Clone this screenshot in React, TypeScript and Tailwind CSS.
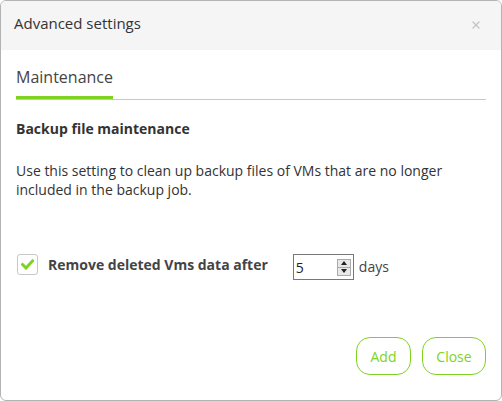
import { X } from 'lucide-react'

export default function App() {
  return (
    <div className="h-[401px] w-[502px] bg-white font-['Open_Sans',sans-serif] text-[#333]">
      <div className="flex h-full flex-col overflow-hidden rounded-[6px] border border-[#b3b3b3]">
        <div className="flex h-[49px] items-start justify-between bg-[#f5f5f5] pl-[13px] pr-[19px] pt-[11px]">
          <h2 className="text-[15px] leading-[22px] text-[#333]">Advanced settings</h2>
          <X size={12} strokeWidth={2.5} className="mt-[7px] text-[#c4c4c4]" />
        </div>

        <div className="flex flex-1 flex-col px-[15px]">
          <div className="mt-[15px] border-b border-[#c8c8c8]">
            <div className="inline-block border-b-[3px] border-[#7ed321] pb-[8px] text-[16px] leading-[22px] text-[#444]">
              Maintenance
            </div>
          </div>

          <h3 className="mt-[19px] text-[14px] font-bold leading-[20px] text-[#333]">
            Backup file maintenance
          </h3>
          <p className="mt-[22px] text-[14px] leading-[19px] text-[#333]">
            Use this setting to clean up backup files of VMs that are no longer included in the backup job.
          </p>

          <div className="mt-[55px] flex items-start">
            <div className="ml-[1px] flex h-[21px] w-[21px] items-center justify-center rounded-[3px] border border-[#c8c8c8] bg-white">
              <svg width="13" height="11" viewBox="0 0 13 11" fill="none" aria-hidden>
                <path d="M1.5 5.5 L5 9 L11.5 2" stroke="#7ed321" strokeWidth="3" strokeLinecap="square" />
              </svg>
            </div>
            <span className="ml-[10px] mt-[1px] text-[14px] font-bold leading-[19px] text-[#444]">
              Remove deleted Vms data after
            </span>
            <div className="ml-[25px] flex h-[26px] w-[61px] items-center justify-between border border-[#777] bg-white pl-[2px] pr-[2px]">
              <span className="text-[14px] text-[#222]">5</span>
              <div className="flex h-[17px] w-[14px] flex-col border border-[#aaa] bg-[#e8e8e8]">
                <div className="flex flex-1 items-center justify-center border-b border-[#aaa]">
                  <div className="h-0 w-0 border-x-[3px] border-b-[4px] border-x-transparent border-b-[#222]" />
                </div>
                <div className="flex flex-1 items-center justify-center">
                  <div className="h-0 w-0 border-x-[3px] border-t-[4px] border-x-transparent border-t-[#222]" />
                </div>
              </div>
            </div>
            <span className="ml-[5px] mt-[3px] text-[14px] leading-[19px] text-[#444]">days</span>
          </div>

          <div className="mt-auto mb-[25px] flex justify-end gap-[11px]">
            <button className="h-[38px] w-[55px] rounded-[14px] border border-[#7ed321] bg-white text-[14px] text-[#7ed321]">
              Add
            </button>
            <button className="h-[38px] w-[64px] rounded-[14px] border border-[#7ed321] bg-white text-[14px] text-[#7ed321]">
              Close
            </button>
          </div>
        </div>
      </div>
    </div>
  )
}
